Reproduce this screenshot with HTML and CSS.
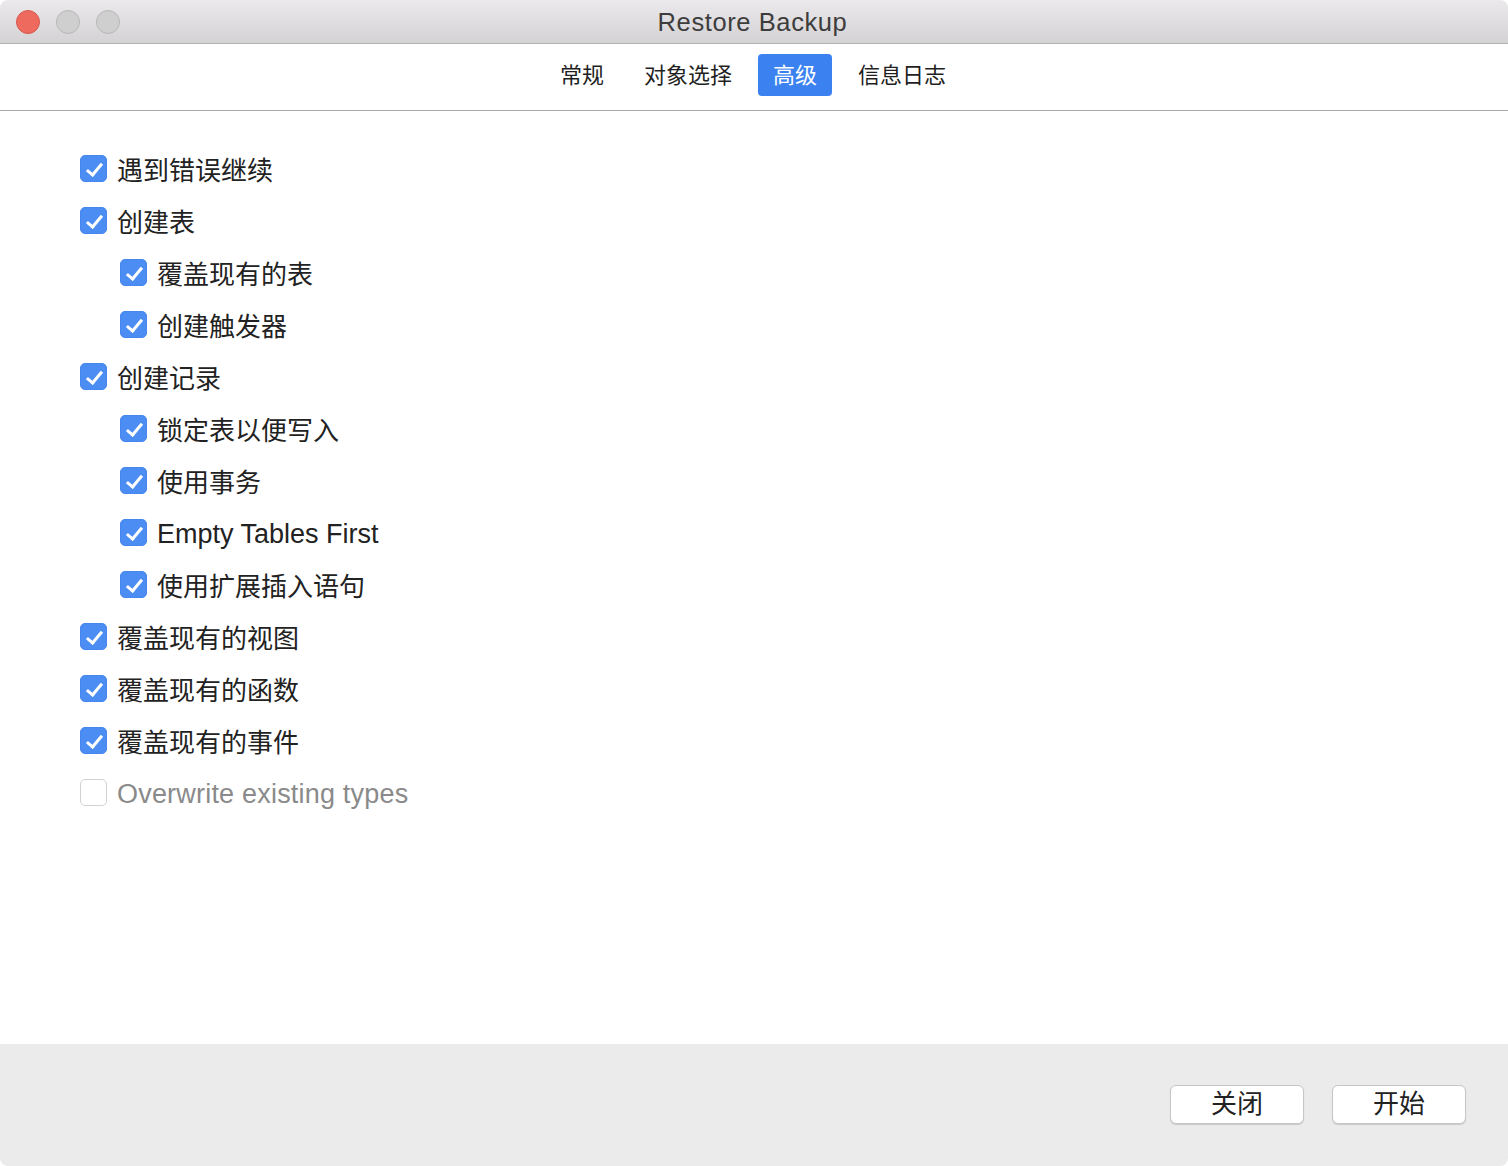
FILE: index.html
```html
<!DOCTYPE html>
<html lang="zh">
<head>
<meta charset="utf-8">
<title>Restore Backup</title>
<link rel="stylesheet" href="styles.css">
</head>
<body>
<div class="window">
  <header class="titlebar">
    <div class="lights">
      <span class="light red"></span>
      <span class="light gray"></span>
      <span class="light gray"></span>
    </div>
    <div class="title">Restore Backup</div>
  </header>
  <nav class="toolbar">
    <span class="tab">常规</span>
    <span class="tab">对象选择</span>
    <span class="tab active">高级</span>
    <span class="tab">信息日志</span>
  </nav>
  <main class="content">
    <label class="row"><span class="box checked"></span><span class="text">遇到错误继续</span></label>
    <label class="row"><span class="box checked"></span><span class="text">创建表</span></label>
    <label class="row sub"><span class="box checked"></span><span class="text">覆盖现有的表</span></label>
    <label class="row sub"><span class="box checked"></span><span class="text">创建触发器</span></label>
    <label class="row"><span class="box checked"></span><span class="text">创建记录</span></label>
    <label class="row sub"><span class="box checked"></span><span class="text">锁定表以便写入</span></label>
    <label class="row sub"><span class="box checked"></span><span class="text">使用事务</span></label>
    <label class="row sub"><span class="box checked"></span><span class="text lat">Empty Tables First</span></label>
    <label class="row sub"><span class="box checked"></span><span class="text">使用扩展插入语句</span></label>
    <label class="row"><span class="box checked"></span><span class="text">覆盖现有的视图</span></label>
    <label class="row"><span class="box checked"></span><span class="text">覆盖现有的函数</span></label>
    <label class="row"><span class="box checked"></span><span class="text">覆盖现有的事件</span></label>
    <label class="row disabled"><span class="box"></span><span class="text lat wide">Overwrite existing types</span></label>
  </main>
  <footer class="footer">
    <button class="btn">关闭</button>
    <button class="btn">开始</button>
  </footer>
</div>
</body>
</html>
```
FILE: styles.css
```css
* { box-sizing: border-box; }
html, body { margin: 0; padding: 0; background: #fff; }
body {
  width: 1508px;
  height: 1166px;
  overflow: hidden;
  font-family: "Liberation Sans", "Noto Sans CJK SC", sans-serif;
  color: #222;
}
.window {
  display: flex;
  flex-direction: column;
  height: 1166px;
  border-radius: 8px;
  overflow: hidden;
}
.titlebar {
  height: 44px;
  flex: none;
  background: linear-gradient(#ebe9eb, #d4d2d4);
  border-bottom: 1px solid #b1b1b1;
  display: flex;
  align-items: center;
  position: relative;
}
.lights {
  display: flex;
  gap: 16px;
  padding-left: 16px;
}
.light {
  width: 24px;
  height: 24px;
  border-radius: 50%;
}
.light.red { background: #ee6a5f; border: 1px solid #d9584e; }
.light.gray { background: #d0cfd0; border: 1px solid #b8b7b8; }
.title {
  position: absolute;
  left: 0; right: 0; top: 0; bottom: 0;
  display: flex;
  align-items: center;
  justify-content: center;
  font-size: 25.5px;
  letter-spacing: 0.6px;
  color: #3d3d3d;
  font-family: "Liberation Sans", sans-serif;
  padding-top: 1px;
  padding-right: 3px;
}
.toolbar {
  height: 67px;
  flex: none;
  border-bottom: 1px solid #a9a9a9;
  display: flex;
  justify-content: center;
  align-items: center;
  padding-bottom: 4px;
  padding-right: 2px;
}
.tab {
  font-size: 22px;
  line-height: 40px;
  height: 42px;
  padding: 2px 19px 0;
  color: #1f1f1f;
  border-radius: 4px;
  margin: 0 1px;
}
.tab.active {
  background: #3b82f0;
  color: #fff;
  padding: 2px 15px 0;
  margin: 0 6px;
}
.content {
  flex: 1;
  padding: 31px 0 0 80px;
  display: flex;
  flex-direction: column;
}
.row {
  height: 52px;
  display: flex;
  align-items: center;
  gap: 10px;
}
.row.sub { padding-left: 40px; }
.box {
  width: 27px;
  height: 27px;
  border-radius: 5px;
  border: 1px solid #d2d2d2;
  background: #fff;
  flex: none;
  position: relative;
}
.box.checked {
  background: #4b8df3;
  border-color: #4686ee;
}
.box.checked::after {
  content: "";
  position: absolute;
  left: 9px;
  top: 4px;
  width: 6px;
  height: 13px;
  border: solid #fff;
  border-width: 0 3px 3px 0;
  transform: rotate(40deg);
}
.text {
  font-size: 26px;
  color: #222;
}
.text.lat {
  font-size: 27px;
  padding-top: 4px;
}
.text.lat.wide { letter-spacing: 0.2px; }
.row.disabled .text { color: #8a8a8a; }
.footer {
  height: 122px;
  flex: none;
  background: #ebebeb;
  display: flex;
  justify-content: flex-end;
  align-items: flex-start;
  padding: 41px 42px 0 0;
  gap: 28px;
}
.btn {
  width: 134px;
  height: 39px;
  background: #fff;
  border: 1px solid #c6c6c6;
  border-radius: 6px;
  box-shadow: 0 1px 1px rgba(0,0,0,0.15);
  font-family: "Liberation Sans", "Noto Sans CJK SC", sans-serif;
  font-size: 26px;
  color: #222;
  padding: 0;
  line-height: 37px;
}
```
